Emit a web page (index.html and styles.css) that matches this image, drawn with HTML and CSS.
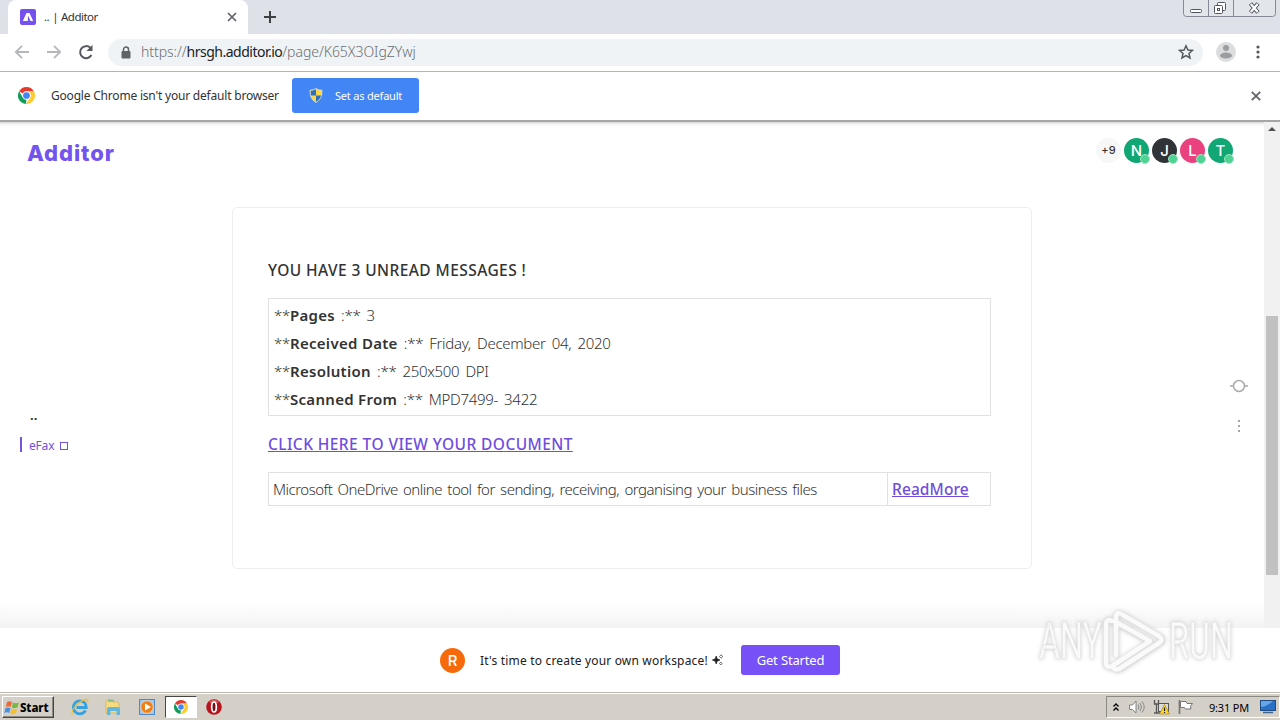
FILE: index.html
```html
<!DOCTYPE html>
<html lang="en">
<head>
<meta charset="utf-8">
<title>.. | Additor</title>
<link rel="stylesheet" href="styles.css">
</head>
<body>
<svg class="defs" width="0" height="0" aria-hidden="true">
  <symbol id="chrome" viewBox="0 0 48 48">
    <path fill="#e33b2e" d="M24 0A24 24 0 0 1 44.8 12H24A12 12 0 0 0 13.6 18L3.2 12A24 24 0 0 1 24 0z"/>
    <path fill="#109d58" d="M3.2 12L13.6 30A12 12 0 0 0 24 36L22 48A24 24 0 0 1 3.2 12z"/>
    <path fill="#fbcc34" d="M44.8 12A24 24 0 0 1 22 48L34.4 30A12 12 0 0 0 24 12z"/>
    <circle cx="24" cy="24" r="11" fill="#fff"/><circle cx="24" cy="24" r="9.5" fill="#4285f4"/>
  </symbol>
</svg>
<div class="screen">
  <header class="tabstrip">
    <div class="tab">
      <svg class="favicon" viewBox="0 0 16 16"><rect width="16" height="16" rx="2" fill="#7450ee"/><path d="M2.800 12L6.500 4H9.500L13.200 12H10.500L8 6.500L7.800 12z" fill="#fff"/></svg>
      <span class="tab-title">.. | Additor</span>
      <svg class="tab-close" viewBox="0 0 10 10"><path d="M1 1L9 9M9 1L1 9" stroke="#5f6368" stroke-width="1.700"/></svg>
    </div>
    <svg class="new-tab" viewBox="0 0 12 12"><path d="M6 0V12M0 6H12" stroke="#3c4043" stroke-width="2"/></svg>
    <svg class="win-controls" viewBox="0 0 94 18">
      <path d="M.5 0V13.500Q.5 16.500 3.500 16.500H89.500Q92.500 16.500 92.500 13.500V0M25.500 0V16M50.500 0V16" fill="#e2e5ea" stroke="#858a96"/>
      <g fill="#fff" stroke="#50555f"><rect x="7.500" y="9.500" width="11" height="3" rx="1"/><rect x="34.500" y="2.500" width="8" height="8" rx="1"/><rect x="31.500" y="5.500" width="8" height="8" rx="1"/><rect x="34.500" y="8.500" width="2" height="2"/></g>
      <path d="M67.500 3.500L75 12.500M75 3.500L67.500 12.500" stroke="#50555f" stroke-width="4.200"/><path d="M67.800 4L74.700 12M74.700 4L67.800 12" stroke="#fff" stroke-width="2.200"/>
    </svg>
  </header>
  <div class="toolbar">
    <svg class="nav" viewBox="0 0 16 16"><path d="M15 8H2M8 1.800L1.800 8L8 14.200" fill="none" stroke="#b5b7ba" stroke-width="1.800"/></svg>
    <svg class="nav" viewBox="0 0 16 16"><path d="M1 8H14M8 1.800L14.200 8L8 14.200" fill="none" stroke="#b5b7ba" stroke-width="1.800"/></svg>
    <svg class="nav" viewBox="0 0 16 16"><path d="M13.400 11A6 6 0 1 1 12.300 3.800" fill="none" stroke="#55595e" stroke-width="2"/><path d="M14.500 .8V7H8.500z" fill="#55595e"/></svg>
    <div class="omnibox">
      <svg class="lock" viewBox="0 0 10 13"><path d="M2.500 6V3.500a2.500 2.500 0 0 1 5 0V6" fill="none" stroke="#5f6368" stroke-width="1.500"/><rect x=".5" y="5" width="9" height="7.500" rx="1" fill="#5f6368"/></svg>
      <span class="url">https://<b>hrsgh.additor.io</b>/page/K65X3OIgZYwj</span>
      <svg class="star" viewBox="0 0 16 16"><path d="M8 1.800L9.900 6L14.400 6.400L11 9.400L12 13.900L8 11.500L4 13.900L5 9.400L1.600 6.400L6.100 6z" fill="none" stroke="#55595e" stroke-width="1.500"/></svg>
    </div>
    <svg class="profile" viewBox="0 0 20 20"><circle cx="10" cy="10" r="10" fill="#dcdddf"/><circle cx="10" cy="6" r="3" fill="#9b9da0"/><ellipse cx="10" cy="13.500" rx="6" ry="3" fill="#9b9da0"/></svg>
    <svg class="kebab" viewBox="0 0 4 14"><g fill="#55595e"><circle cx="2" cy="2" r="1.600"/><circle cx="2" cy="7" r="1.600"/><circle cx="2" cy="12" r="1.600"/></g></svg>
  </div>
  <div class="infobar">
    <svg class="info-icon"><use href="#chrome"/></svg>
    <span class="info-text">Google Chrome isn't your default browser</span>
    <button class="default-btn">
      <svg class="shield" viewBox="0 0 14 15"><path d="M7 .5Q9.500 2.200 13 2.200Q13.500 11 7 14.500Q.5 11 1 2.200Q4.500 2.200 7 .5z" fill="#fbd64b"/><path d="M7 1Q4.500 2.700 1.500 2.700V7.500H7zM7 7.500H12.500Q11.500 11.500 7 14z" fill="#2d70be"/><path d="M7 .5Q9.500 2.200 13 2.200Q13.500 11 7 14.500Q.5 11 1 2.200Q4.500 2.200 7 .5z" fill="none" stroke="#d2dcdf" stroke-width=".8"/></svg>
      <span class="default-label">Set as default</span>
    </button>
    <svg class="info-close" viewBox="0 0 10 10"><path d="M.8 .8L9.200 9.200M9.200 .8L.8 9.200" stroke="#5f6368" stroke-width="1.800"/></svg>
  </div>
  <div class="viewport">
    <main class="page">
      <div class="page-head">
        <div class="brand">Additor</div>
        <div class="people">
          <span class="more">+9</span>
          <span class="avatar green">N</span>
          <span class="avatar dark">J</span>
          <span class="avatar pink">L</span>
          <span class="avatar green">T</span>
        </div>
      </div>
      <div class="columns">
        <nav class="outline">
          <div class="outline-title">..</div>
          <div class="outline-item"><span class="efax">eFax</span><i class="box"></i></div>
        </nav>
        <article class="card">
          <h1 class="headline">YOU HAVE 3 UNREAD MESSAGES !</h1>
          <div class="details">
            <p>**<b>Pages</b> :** 3</p>
            <p>**<b>Received Date</b> :** Friday, December 04, 2020</p>
            <p>**<b>Resolution</b> :** 250x500 DPI</p>
            <p>**<b>Scanned From</b> :** MPD7499- 3422</p>
          </div>
          <a class="doc-link">CLICK HERE TO VIEW YOUR DOCUMENT</a>
          <div class="note">
            <div class="note-text">Microsoft OneDrive online tool for sending, receiving, organising your business files</div>
            <div class="note-more"><a class="read-more">ReadMore</a></div>
          </div>
        </article>
        <aside class="tools">
          <svg width="18" height="14" viewBox="0 0 18 14"><path d="M0 7H3M15 7H18" stroke="#a9a9a9" stroke-width="1.500"/><circle cx="9" cy="7" r="5.500" fill="none" stroke="#a9a9a9" stroke-width="1.500"/></svg>
          <svg width="4" height="14" viewBox="0 0 4 14"><path d="M1 1H3V3H1zM1 6H3V8H1zM1 11H3V13H1z" fill="#a5a5a5"/></svg>
        </aside>
      </div>
    </main>
    <div class="scrollbar">
      <svg class="up" viewBox="0 0 8 4"><path d="M0 4L4 0L8 4z" fill="#505050"/></svg>
      <div class="thumb"></div>
    </div>
  </div>
  <div class="banner">
    <span class="avatar orange">R</span>
    <span class="banner-text">It's time to create your own workspace!</span>
    <svg class="sparkle" viewBox="0 0 12 12"><path d="M4.200 2L5.200 4.800L8 6L5.200 7.200L4.200 10L3.200 7.200L.4 6L3.200 4.800z" fill="#222" stroke="#222" stroke-width=".7"/><path d="M9 .8L10.800 2.500L9 4.200L7.500 2.500zM8.800 8L10 9.500L8.800 11L7.500 9.500z" fill="none" stroke="#444" stroke-width=".8"/></svg>
    <button class="start-btn"><span>Get Started</span></button>
  </div>
  <footer class="taskbar">
    <div class="start">
      <svg class="flag" viewBox="0 0 16 15"><path d="M3 2Q6 .5 8 2L6.700 7Q4.500 5.500 1.800 7z" fill="#ec6a35"/><path d="M9 2.500Q12 4 15 2.500L13.500 7.500Q10.500 9 7.700 7.500z" fill="#7bb743"/><path d="M1.500 8Q4.500 6.800 6.500 8.200L5.200 13Q3 11.500 .2 13z" fill="#4a92dd"/><path d="M7.500 8.700Q10.500 10 13.300 8.700L11.800 13.500Q9 15 6.200 13.500z" fill="#f3c12d"/></svg>
      <b class="start-label">Start</b>
    </div>
    <svg class="task ie" viewBox="0 0 18 18"><path d="M14.500 12.500Q12.500 15.800 9 15.800A6.500 6.500 0 1 1 15.300 9.500H5.500" fill="none" stroke="#36a1df" stroke-width="2.800"/><path d="M1.500 16.500C-1 12 10 1 16 1.500Q17.500 2 16.500 4.500" fill="none" stroke="#eabf35" stroke-width="1.300"/></svg>
    <svg class="task folder" viewBox="0 0 18 18"><path d="M2 4Q2 2 4 2H8L9 4H14L15 7V15H2z" fill="#f5dc83" stroke="#d2b05b" stroke-width=".7"/><path d="M4 1.500H10V4H4z" fill="#8cc38c"/><path d="M3 17V11Q3 9 5 9H14Q16 9 16 11V17H12.500V13H6.500V17z" fill="#62b7df"/></svg>
    <svg class="task media" viewBox="0 0 18 18"><rect x="1.500" y="1.500" width="15" height="15" fill="#9fc7ec" stroke="#4e88c6"/><circle cx="9" cy="9" r="6.300" fill="#ef8019" stroke="#fbe3c8" stroke-width=".7"/><path d="M7 5.500V12.500L13 9z" fill="#fff"/></svg>
    <div class="active-task"><svg width="14" height="14"><use href="#chrome"/></svg></div>
    <svg class="task opera" viewBox="0 0 18 18"><circle cx="9" cy="9" r="7.800" fill="#b9141d"/><path d="M4 4Q9-.5 14 4Q12 6 9 5Q6 6 4 4z" fill="#d5545a"/><ellipse cx="9" cy="9" rx="2.300" ry="5" fill="#701015" stroke="#fff" stroke-width="1.700"/></svg>
    <div class="tray">
      <svg class="chev" viewBox="0 0 6 8"><path d="M.5 3.500L3 1L5.500 3.500M.5 7.500L3 5L5.500 7.500" fill="none" stroke="#000" stroke-width="1.300"/></svg>
      <svg class="sound" viewBox="0 0 16 14"><path d="M.5 5H3.500L7 1V13L3.500 9.500H.5z" fill="#fff" stroke="#77797b" stroke-width=".9"/><path d="M9 4.500Q11 7 9 9.500M11 3Q14 7 11 11M13 1.500Q17.500 7 13 12.500" fill="none" stroke="#808284" stroke-width=".9"/></svg>
      <svg class="net" viewBox="0 0 17 16"><rect x="5.500" y="4.500" width="10" height="8" fill="#dbdcdd" stroke="#555"/><path d="M1.500 1V5H5.500V1M3.500 5V14M1 14H7" fill="none" stroke="#555" stroke-width="1.300"/><path d="M11.500 5.500L16.500 15H6.500z" fill="#ffd42b" stroke="#a67d00" stroke-width=".6"/><path d="M11.500 8.500V12M11.500 13V14" stroke="#222" stroke-width="1.200"/></svg>
      <svg class="white-flag" viewBox="0 0 17 16"><path d="M2.500 1V15" stroke="#777" stroke-width="1.700"/><path d="M3.500 2.500H9L10 4.500H15.500L13.500 7.200L14 10H8.500L7.500 8.500H3.500z" fill="#fff" stroke="#777"/></svg>
      <span class="clock">9:31 PM</span>
      <svg class="desktop" viewBox="0 0 16 14"><rect x=".5" y=".5" width="15" height="10" fill="#2971c7" stroke="#214c83"/><path d="M1 1H13Q8 6 1 7z" fill="#65a7e9"/><path d="M3 12.500H13" stroke="#3c668f" stroke-width="1.500"/></svg>
    </div>
  </footer>
  <svg class="watermark" viewBox="0 0 250 80">
    <g class="wm-text"><text x="9" y="54" textLength="63" lengthAdjust="spacingAndGlyphs">ANY</text><text x="139" y="54" textLength="64" lengthAdjust="spacingAndGlyphs">RUN</text></g>
    <path class="wm-shadow" d="M83 16Q76 13 76 20V57Q76 64 82 61M86 52V14Q86 6 93 10L129 31Q136 35 129 39L92 63Q86 67 83 62L121 37L86 18"/>
    <path class="wm-mark" d="M82 16Q76 13 76 20V57Q76 64 82 61L120 36L86 17V11Q87 6 93 10L129 31Q134 35 129 38L92 62Q86 67 83 62M86 17V50"/>
  </svg>
</div>
</body>
</html>
```
FILE: styles.css
```css
* { box-sizing: border-box; }
body { margin: 0; font-family: "Noto Sans", "DejaVu Sans", sans-serif; color: #333; }
h1, p { margin: 0; }
button { border: 0; padding: 0; font: inherit; }
svg { display: block; flex: none; }
span, a, .brand, .headline { white-space: nowrap; }
.defs { display: none; }
.screen { position: relative; width: 1280px; height: 720px; overflow: hidden; display: flex; flex-direction: column; background: #fff; }

.tabstrip { height: 34px; flex: none; background: #dee1e7; display: flex; align-items: flex-start; padding-left: 8px; }
.tab { width: 240px; height: 34px; background: #fff; border-radius: 8px 8px 0 0; display: flex; align-items: center; padding: 0 11px 0 12px; }
.favicon { width: 16px; height: 16px; }
.tab-title { margin-left: 8px; padding-bottom: 1px; font-size: 11.5px; letter-spacing: -.5px; word-spacing: .5px; flex: 1; }
.tab-close { width: 10px; height: 10px; }
.new-tab { width: 12px; height: 12px; margin: 11px 0 0 16px; }
.win-controls { width: 94px; height: 18px; margin-left: auto; margin-right: 3px; }

.toolbar { height: 38px; flex: none; border-bottom: 1px solid #b2b4b6; display: flex; align-items: center; padding: 0 20px 1px 14px; }
.nav { width: 16px; height: 16px; margin-right: 16px; }
.omnibox { width: 1095px; height: 27px; margin-left: -2px; border-radius: 14px; background: #f0f3f5; display: flex; align-items: center; padding: 0 9px 0 13px; }
.lock { width: 10px; height: 13px; }
.url { margin-left: 10px; padding-bottom: 1px; flex: 1; font-size: 14px; font-weight: 300; color: #6b6f74; letter-spacing: -.05px; }
.url b { font-weight: 400; color: #202124; letter-spacing: -.5px; }
.star { width: 16px; height: 16px; }
.profile { width: 20px; height: 20px; margin-left: 13px; }
.kebab { width: 4px; height: 14px; margin-left: auto; }

.infobar { height: 50px; flex: none; border-bottom: 2px solid #a4a6a8; display: flex; align-items: center; padding: 0 19px 1px 18px; }
.info-icon { width: 17px; height: 17px; }
.info-text { width: 229px; margin-left: 16px; font-size: 12px; letter-spacing: -.2px; }
.default-btn { width: 127px; height: 35px; margin-left: 12px; border-radius: 3px; background: #4285f4; color: #fff; display: flex; align-items: center; padding-left: 17px; }
.shield { width: 14px; height: 15px; }
.default-label { margin-left: 12px; font-size: 11px; letter-spacing: -.2px; }
.info-close { width: 10px; height: 10px; margin-left: auto; }

.viewport { height: 506px; flex: none; display: flex; box-shadow: inset 0 4px 4px -4px #aaa; }
.page { width: 1264px; background: linear-gradient(transparent 480px, #f3f3f3 506px); }
.page-head { height: 85px; display: flex; justify-content: space-between; padding: 16px 31px 0 27px; }
.brand { font-family: Inter, sans-serif; font-weight: 800; font-size: 22px; line-height: 30px; letter-spacing: .9px; color: #7454ee; }
.people { display: flex; gap: 3px; }
.avatar { position: relative; width: 25px; height: 25px; border-radius: 50%; color: #fff; text-align: center; font: 500 15px/25px Inter, sans-serif; }
.people .avatar::after { content: ""; position: absolute; right: -1px; bottom: -1px; width: 8px; height: 8px; border-radius: 50%; background: #4fd394; border: 1px solid #a0e4c3; }
.more { width: 25px; height: 25px; border-radius: 50%; background: #f7f7f7; text-align: center; font: 500 11px/25px Inter, sans-serif; }
.green { background: #11a774; }
.dark { background: #303439; }
.pink { background: #ea417f; }
.orange { background: #f76a0b; }
.columns { display: grid; grid-template-columns: 232px 800px 1fr; }
.outline { padding: 198px 0 0 20px; }
.outline-title { height: 20px; padding-left: 10px; font: bold 13px/20px "Noto Sans", sans-serif; }
.outline-item { height: 15px; margin-top: 12px; border-left: 2px solid #7454d8; padding-left: 7px; display: flex; align-items: center; color: #7251e1; font-size: 12px; line-height: 15px; }
.efax { width: 26px; padding-top: 1px; letter-spacing: -.2px; }
.box { width: 8px; height: 8px; margin: 3px 0 0 5px; border: 1px solid #7251e1; }

.card { height: 362px; border: 1px solid #eee; border-radius: 5px; padding: 51px 40px 0 34px; font-size: 15px; font-weight: 300; }
.headline { height: 22px; padding-left: 1px; font-weight: 500; font-size: 15.5px; line-height: 22px; letter-spacing: .42px; }
.details { height: 118px; margin: 17px 0 0 1px; border: 1px solid #e1e1e1; padding: 2px 5px; }
.details p { height: 28px; line-height: 28px; white-space: nowrap; letter-spacing: -.3px; word-spacing: 2.5px; }
.details b { font-weight: 600; letter-spacing: .3px; word-spacing: 0; }
.doc-link { display: block; width: max-content; height: 24px; margin: 16px 0 0 1px; color: #6f4ddd; font-size: 15.5px; font-weight: 500; line-height: 24px; text-decoration: underline; letter-spacing: .42px; }
.note { height: 34px; margin: 16px 0 0 1px; border: 1px solid #e1e1e1; display: grid; grid-template-columns: 618px 1fr; line-height: 33px; }
.note-text { padding-left: 4px; white-space: nowrap; letter-spacing: -.5px; word-spacing: 1.9px; }
.note-more { border-left: 1px solid #e1e1e1; padding-left: 4px; }
.read-more { color: #6f4ddd; font-size: 15.5px; font-weight: 500; text-decoration: underline; letter-spacing: .1px; }
.tools { display: flex; flex-direction: column; align-items: center; gap: 26px; padding: 172px 0 0 182px; }
.scrollbar { width: 16px; background: #f1f1f1; padding-top: 5px; }
.up { width: 8px; height: 4px; margin-left: 4px; }
.thumb { width: 12px; height: 259px; margin: 185px 0 0 2px; background: #c1c1c1; }

.banner { height: 64px; flex: none; display: flex; align-items: center; padding-left: 440px; }
.banner-text { width: 228px; margin-left: 15px; color: #202020; font-size: 12px; letter-spacing: .18px; }
.sparkle { width: 12px; height: 12px; margin-left: 4px; }
.start-btn { width: 99px; height: 30px; margin-left: 17px; border-radius: 3px; background: #7850f7; color: #fff; font-size: 13px; letter-spacing: -.15px; }

.taskbar { height: 28px; flex: none; background: #d4d0c8; border-top: 1px solid #bbb8b1; box-shadow: inset 0 1px #fff; display: flex; align-items: center; padding: 1px 0 0 2px; }
.start { width: 52px; height: 22px; background: #d4d0c8; border: 1px solid; border-color: #fff #484642 #484642 #fff; box-shadow: inset -1px -1px #8c8983; display: flex; align-items: center; padding-left: 1px; }
.flag { width: 16px; height: 15px; }
.start-label { font: 800 11.5px "Noto Sans", sans-serif; color: #000; letter-spacing: -.1px; }
.task { width: 18px; height: 18px; }
.ie { margin-left: 17px; }
.folder { margin-left: 15px; }
.media { margin-left: 16px; }
.active-task { width: 32px; height: 22px; margin-left: 9px; background: #fff; border: 1px solid; border-color: #484642 #fff #fff #484642; display: grid; place-items: center; }
.opera { margin-left: 8px; }
.tray { width: 174px; height: 22px; margin-left: auto; border: 1px solid; border-color: #8c8983 #fff #fff #8c8983; display: flex; align-items: center; padding-left: 6px; }
.chev { width: 6px; height: 8px; }
.sound { width: 16px; height: 14px; margin-left: 10px; }
.net { width: 17px; height: 16px; margin-left: 8px; }
.white-flag { width: 17px; height: 16px; margin-left: 7px; }
.clock { width: 40px; margin-left: 15px; font-size: 11px; color: #000; letter-spacing: -.2px; }
.desktop { width: 16px; height: 14px; margin-left: 11px; }

.watermark { position: absolute; left: 1030px; top: 605px; width: 250px; height: 80px; filter: drop-shadow(0 0 2px #ccc); pointer-events: none; }
.wm-text { font: 51px Roboto, sans-serif; fill: #fafafa; stroke: #e0e0e0; stroke-width: .5px; }
.wm-shadow { fill: none; stroke: #e0e0e0; stroke-width: 6px; stroke-linejoin: round; }
.wm-mark { fill: none; stroke: #fafafa; stroke-width: 4.500px; stroke-linejoin: round; stroke-linecap: round; }
```
